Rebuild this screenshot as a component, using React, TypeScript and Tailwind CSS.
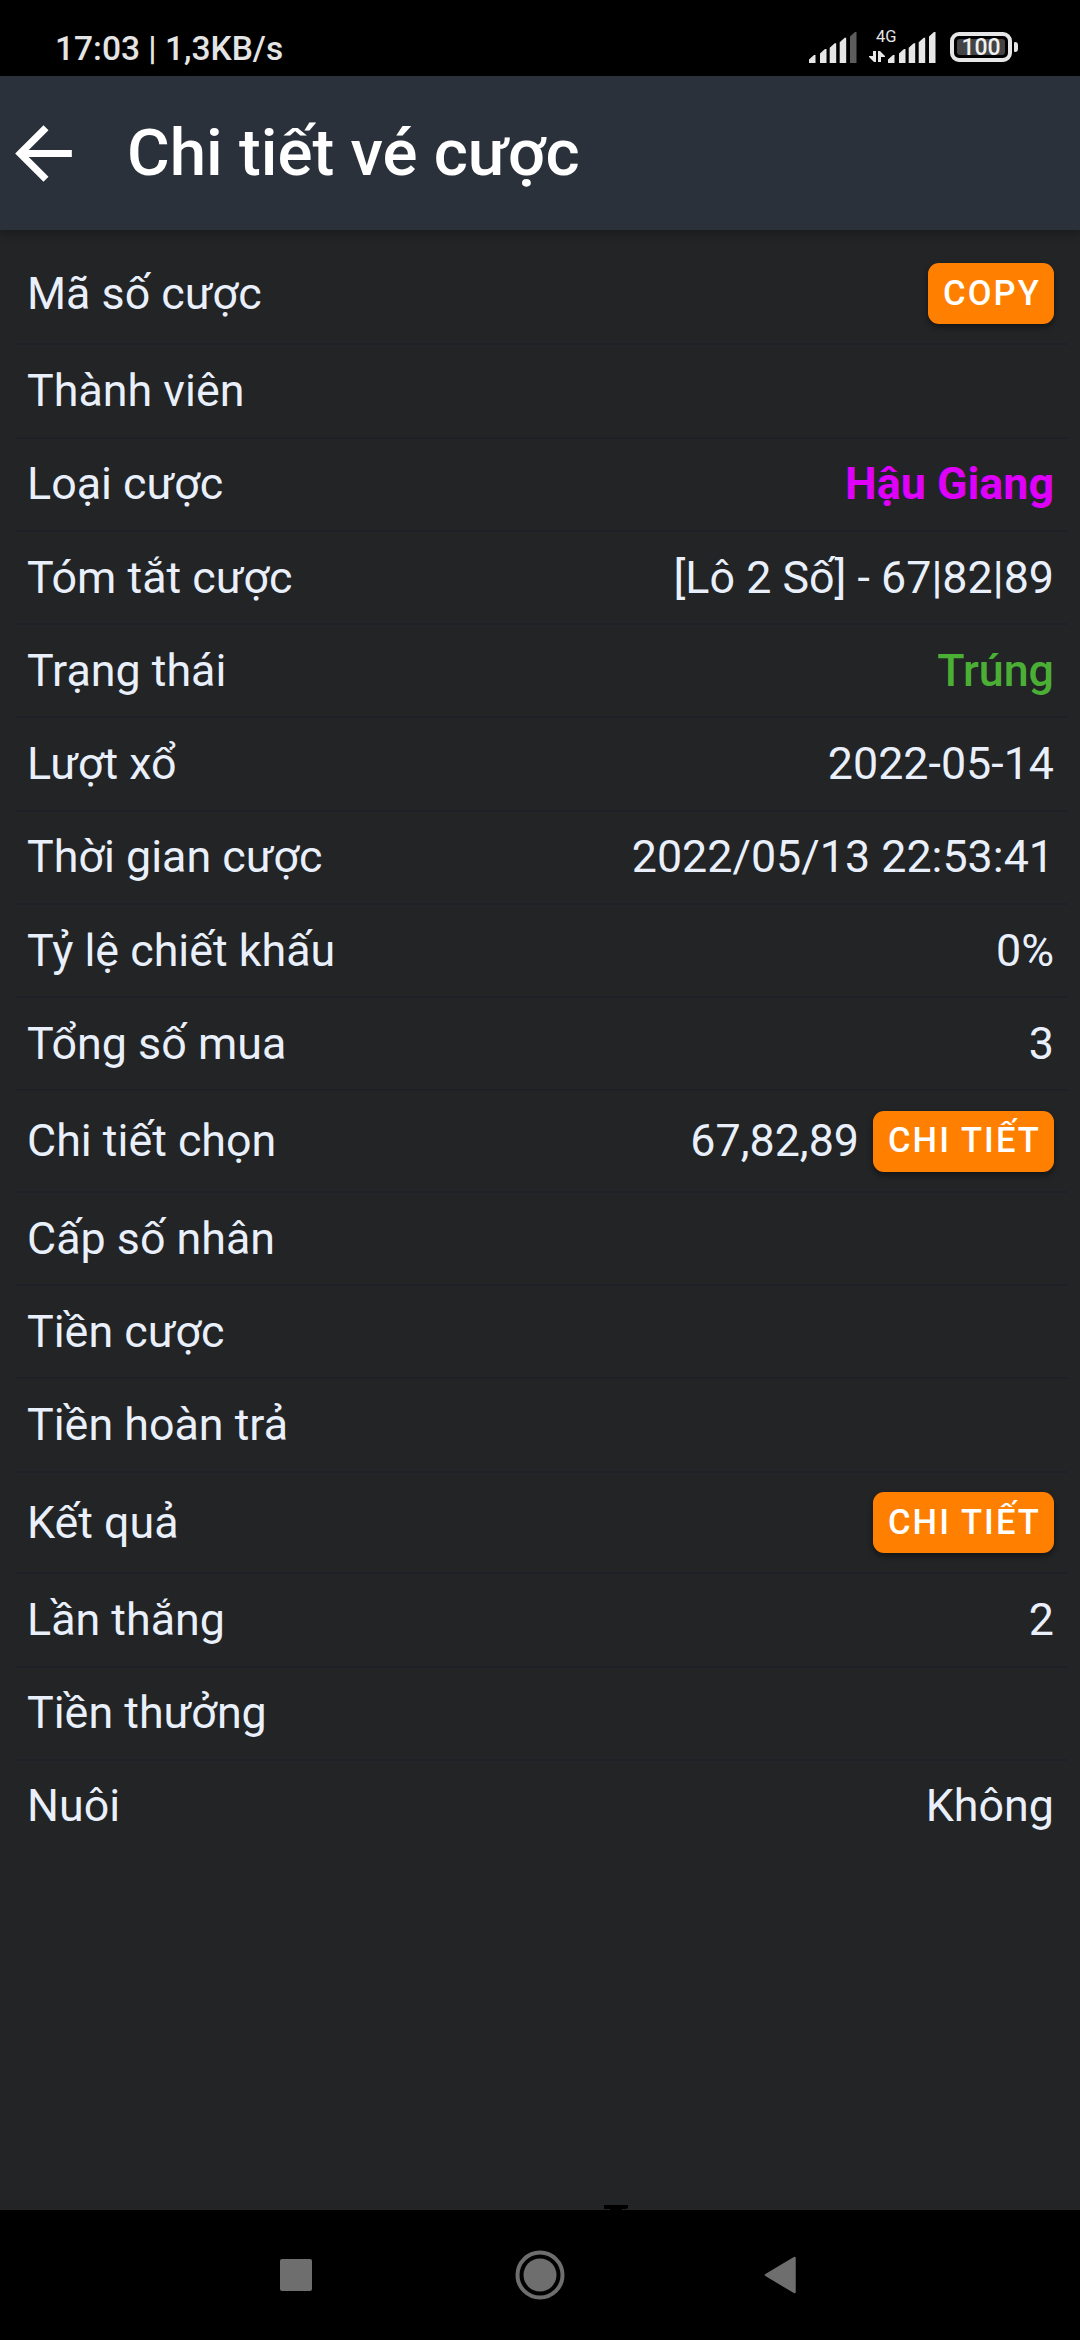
import type { ReactNode } from "react";

type Row = {
  label: string;
  value?: ReactNode;
  tall?: boolean;
};

function DetailButton({ children, className }: { children: string; className: string }) {
  return (
    <button
      type="button"
      className={`flex h-[61px] items-center justify-center rounded-[11px] bg-[#ff7f00] pb-px pl-[2px] text-[34.5px] font-medium leading-none tracking-[2.1px] text-white shadow-[0_3px_6px_rgba(0,0,0,0.45)] ${className}`}
    >
      {children}
    </button>
  );
}

const rows: Row[] = [
  { label: "Mã số cược", value: <DetailButton className="w-[126px]">COPY</DetailButton>, tall: true },
  { label: "Thành viên" },
  { label: "Loại cược", value: <span className="font-bold text-[#df00fb]">Hậu Giang</span> },
  { label: "Tóm tắt cược", value: "[Lô 2 Số] - 67|82|89" },
  { label: "Trạng thái", value: <span className="font-medium text-[#4caf35]">Trúng</span> },
  { label: "Lượt xổ", value: "2022-05-14" },
  { label: "Thời gian cược", value: "2022/05/13 22:53:41" },
  { label: "Tỷ lệ chiết khấu", value: "0%" },
  { label: "Tổng số mua", value: "3" },
  {
    label: "Chi tiết chọn",
    value: (
      <>
        <span>67,82,89</span>
        <DetailButton className="w-[181px]">CHI TIẾT</DetailButton>
      </>
    ),
    tall: true,
  },
  { label: "Cấp số nhân" },
  { label: "Tiền cược" },
  { label: "Tiền hoàn trả" },
  { label: "Kết quả", value: <DetailButton className="w-[181px]">CHI TIẾT</DetailButton>, tall: true },
  { label: "Lần thắng", value: "2" },
  { label: "Tiền thưởng" },
  { label: "Nuôi", value: "Không" },
];

const bars = [
  { x: 0, top: 23 },
  { x: 11, top: 17 },
  { x: 20.7, top: 11.3 },
  { x: 30.7, top: 5.7 },
  { x: 41, top: 0 },
];

function Signal({ strength }: { strength: number }) {
  return (
    <svg width="48" height="31" viewBox="0 0 48 31" className="shrink-0">
      {bars.map((bar, i) => (
        <path
          key={bar.x}
          d={`M${bar.x} ${bar.top + 4.5}L${bar.x + 5} ${bar.top}H${bar.x + 6.5}V31H${bar.x}Z`}
          fill={i < strength ? "#e6e6e6" : "#5c5c5c"}
        />
      ))}
    </svg>
  );
}

function StatusBar() {
  return (
    <div className="flex h-[76px] items-start justify-between bg-black pl-[55px] pr-[62px] text-[#e4e4e4]">
      <span className="mt-[29px] text-[33.5px] font-medium leading-[40px]">17:03 | 1,3KB/s</span>
      <div className="mt-[32px] flex">
        <Signal strength={4} />
        <div className="relative ml-[31px]">
          <Signal strength={5} />
          <span className="absolute -left-[12px] -top-[4px] text-[16.5px] leading-[18px]">4G</span>
          <svg width="16" height="12" viewBox="0 0 16 12" className="absolute -left-[19px] top-[19px]" fill="#e6e6e6">
            <path d="M4 0h3v11H5L0 6V5h4Z" />
            <path d="M9 0h2l5 5v1h-4v5H9Z" />
          </svg>
        </div>
        <div className="ml-[14px] flex h-[30px] w-[62px] items-center justify-center rounded-[9px] border-4 border-[#e6e6e6]">
          <div className="flex h-[16px] w-[48px] items-center justify-center rounded-[3px] bg-[#444444]">
            <span className="pt-px text-[23px] font-medium leading-none text-[#f0f0f0]">100</span>
          </div>
        </div>
        <div className="ml-[2px] mt-[10px] h-[10px] w-[4px] rounded-r-[3px] rounded-l-[1px] bg-[#e6e6e6]" />
      </div>
    </div>
  );
}

function NavBar() {
  return (
    <div className="relative flex h-[130px] items-center bg-black pl-[280px] pr-[284px]">
      <svg width="24" height="5" viewBox="0 0 24 5" className="absolute -top-[5px] left-[604px]">
        <path d="M0 0H24V3L22 4H18V5H6V4H0Z" fill="#000" />
      </svg>
      <div className="h-[32px] w-[32px] rounded-[2px] bg-[#6e6e6e]" />
      <svg width="50" height="50" viewBox="0 0 50 50" className="ml-[203px]">
        <circle cx="25" cy="25" r="22.500" fill="none" stroke="#6e6e6e" strokeWidth="4" />
        <circle cx="25" cy="25" r="16.500" fill="#6e6e6e" />
      </svg>
      <svg width="32" height="38" viewBox="0 0 32 38" className="ml-auto">
        <path d="M2 19L30.500 2V36Z" fill="#6e6e6e" stroke="#6e6e6e" strokeWidth="2.500" strokeLinejoin="round" />
      </svg>
    </div>
  );
}

export default function App() {
  return (
    <div className="flex h-[2340px] w-[1080px] flex-col overflow-hidden bg-[#222426] font-[Roboto,sans-serif]">
      <StatusBar />
      <header className="flex h-[154px] items-center bg-[#2b313b] pl-px text-white shadow-[0_2px_10px_rgba(0,0,0,0.35)]">
        <svg width="85" height="85" viewBox="0 0 24 24" fill="currentColor">
          <path d="M20 11H7.830l5.590-5.590L12 4l-8 8 8 8 1.410-1.410L7.830 13H20v-2z" />
        </svg>
        <h1 className="ml-[41px] text-[65.4px] font-medium leading-none">Chi tiết vé cược</h1>
      </header>
      <main className="flex-1 pl-[15px] pr-[13px] pt-[13.8px]">
        {rows.map((row) => (
          <div
            key={row.label}
            className={`flex items-center justify-between border-b-2 border-[#1e2027] pl-[12px] pr-[13px] text-[44.8px] leading-[44px] text-[#e9f0fb] last:border-transparent ${row.tall ? "h-[101.6px]" : "h-[93.25px]"}`}
          >
            <span>{row.label}</span>
            <span className="flex items-center gap-[14px]">{row.value}</span>
          </div>
        ))}
      </main>
      <NavBar />
    </div>
  );
}
